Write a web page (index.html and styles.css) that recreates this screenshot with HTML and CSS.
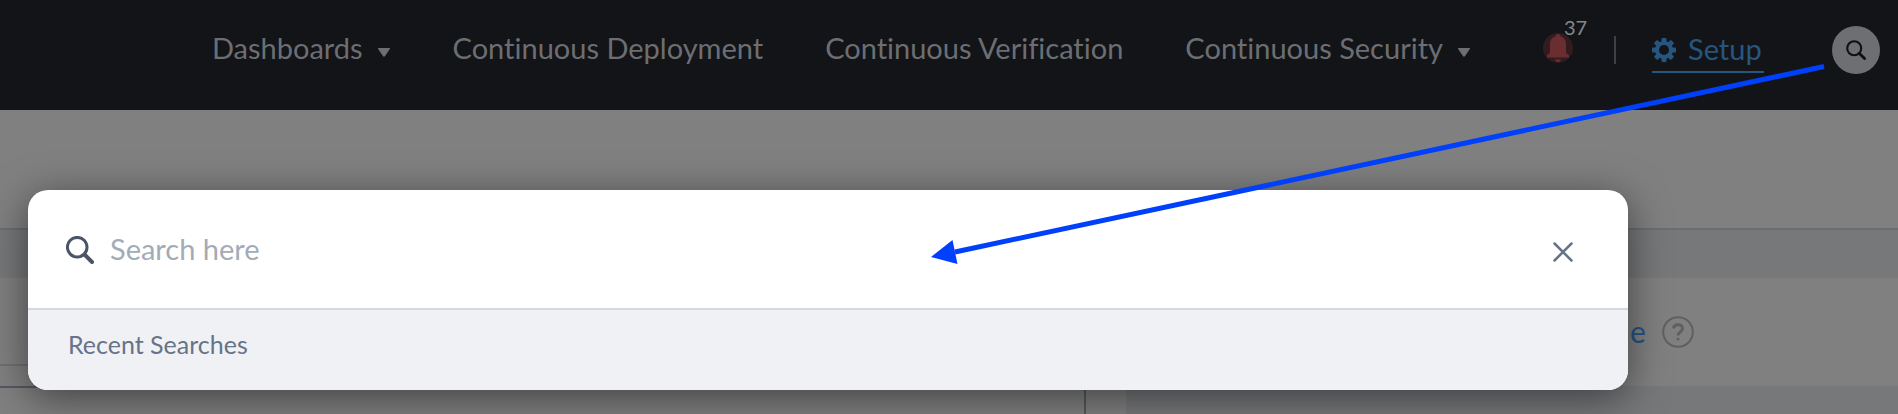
FILE: index.html
```html
<!DOCTYPE html>
<html lang="en">
<head>
<meta charset="utf-8">
<title>Setup</title>
<link rel="stylesheet" href="styles.css">
</head>
<body>
<header class="topbar">
  <nav class="nav">
    <button class="nav-item" type="button">Dashboards <svg class="caret" viewBox="0 0 14 10" aria-hidden="true"><path d="M1 0h12q1.400 0 .5 1.200L8 9.300q-1 1-2 0L.5 1.200Q-.4 0 1 0z"/></svg></button>
    <a class="nav-item" href="#">Continuous Deployment</a>
    <a class="nav-item" href="#">Continuous Verification</a>
    <button class="nav-item" type="button">Continuous Security <svg class="caret" viewBox="0 0 14 10" aria-hidden="true"><path d="M1 0h12q1.400 0 .5 1.200L8 9.300q-1 1-2 0L.5 1.200Q-.4 0 1 0z"/></svg></button>
  </nav>
  <button class="alerts" type="button" aria-label="37 alerts">
    <svg class="bell" viewBox="0 0 30 30" aria-hidden="true">
      <circle cx="15" cy="15" r="15" fill="#331c20"/>
      <path fill="#6a2d30" d="M15 1c1.500 0 2.500 1 2.700 2.600C21.500 4.800 23 8 23 11.500V18c0 2 .8 3.200 3 4.200V24.500H4V22.200C6.200 21.200 7 20 7 18v-6.500C7 8 8.500 4.800 12.300 3.600 12.500 2 13.500 1 15 1zM12 26.500h6q-.6 2.500-3 2.500t-3-2.500z"/>
    </svg>
    <span class="alert-count">37</span>
  </button>
  <span class="divider"></span>
  <a class="setup" href="#">
    <svg class="gear" viewBox="0 0 24 24" aria-hidden="true">
      <g fill="#265680">
        <rect x="9.500" y="0" width="5" height="24" rx="1"/>
        <rect x="9.500" y="0" width="5" height="24" rx="1" transform="rotate(45 12 12)"/>
        <rect x="9.500" y="0" width="5" height="24" rx="1" transform="rotate(90 12 12)"/>
        <rect x="9.500" y="0" width="5" height="24" rx="1" transform="rotate(135 12 12)"/>
        <circle cx="12" cy="12" r="9"/>
      </g>
      <circle cx="12" cy="12" r="5" fill="#121418"/>
    </svg>
    Setup
  </a>
  <button class="search-toggle" type="button" aria-label="Search">
    <svg viewBox="0 0 28 28" aria-hidden="true"><circle cx="11.500" cy="11.500" r="9.800"/><path d="M18.500 18.500L26 26" class="handle"/></svg>
  </button>
</header>

<main class="page">
  <div class="title-row"></div>
  <div class="band"></div>
  <div class="columns">
    <section class="list">
      <div class="list-head"></div>
      <div class="list-box"></div>
    </section>
    <section class="guide">
      <div class="guide-card">
        <a class="guide-link" href="#">e</a>
        <svg class="help" viewBox="0 0 32 32" aria-hidden="true"><circle cx="16" cy="16" r="14.800"/><path d="M11.500 12.500C11.800 10 13.600 8.800 16 8.800c2.600 0 4.500 1.400 4.500 3.700 0 3.500-4.500 3.500-4.500 7" class="mark"/><circle cx="16" cy="23" r="1.500" class="dot"/></svg>
      </div>
    </section>
  </div>
</main>

<div class="dialog" role="dialog" aria-label="Search">
  <div class="search-row">
    <label class="search-label" for="q" aria-label="Search">
      <svg viewBox="0 0 28 28" aria-hidden="true"><circle cx="11.200" cy="11.200" r="9.800"/><path d="M18.500 18.500L26 26" class="handle"/></svg>
    </label>
    <input class="search-input" id="q" type="text" placeholder="Search here">
    <button class="close" type="button" aria-label="Close"><svg viewBox="0 0 20 20" aria-hidden="true"><path d="M1.500 1.500l17 17M18.500 1.500l-17 17"/></svg></button>
  </div>
  <div class="recent">Recent Searches</div>
</div>

<svg class="arrow" viewBox="0 0 894 199" aria-hidden="true">
  <path d="M893 8.500L24 194" fill="none" stroke="#0040fb" stroke-width="5"/>
  <path d="M0 199L21.500 182L26.500 206z" fill="#0040fb"/>
</svg>
</body>
</html>
```
FILE: styles.css
```css
* { box-sizing: border-box; }
html { height: 100%; }
body {
  margin: 0;
  min-height: 100%;
  display: flex;
  flex-direction: column;
  position: relative;
  overflow: hidden;
  background: #808080;
  font-family: Lato, "Open Sans", sans-serif;
  font-size: 29px;
  font-variant-ligatures: none;
}
button { border: 0; padding: 0; background: none; font: inherit; color: inherit; cursor: pointer; }
a { color: inherit; text-decoration: none; }
svg { display: block; flex: none; fill: none; }

.topbar {
  display: flex;
  align-items: center;
  justify-content: flex-end;
  height: 110px;
  padding: 0 18px 10px 0;
  background: #121418;
  color: #6d6e72;
}
.nav { display: flex; gap: 62px; margin: 0 72px 4px 0; }
.nav-item { display: flex; align-items: center; gap: 14px; line-height: 36px; white-space: nowrap; }
.caret { width: 14px; height: 9px; margin-top: 8px; fill: #6d6e72; }
.alerts { position: relative; width: 30px; margin: 0 41px 4px 0; }
.bell { width: 30px; height: 30px; }
.alert-count { position: absolute; left: 21px; top: -18px; font-size: 20px; line-height: 24px; color: #85868a; }
.divider { width: 2px; height: 28px; margin-right: 36px; background: #3c4147; }
.setup {
  display: flex;
  align-items: center;
  gap: 12px;
  margin: 4px 68px 0 0;
  padding-bottom: 4px;
  min-width: 112px;
  line-height: 36px;
  color: #265680;
  border-bottom: 2px solid #265680;
}
.gear { width: 24px; height: 24px; margin-top: 2px; }
.search-toggle {
  display: grid;
  place-items: center;
  width: 48px;
  height: 48px;
  border-radius: 50%;
  background: #6e6f73;
}
.search-toggle svg { width: 20px; height: 20px; stroke: #0e1013; stroke-width: 3; }
.handle { stroke-width: 4; stroke-linecap: round; }

.page { flex: 1; display: flex; flex-direction: column; }
.title-row { height: 120px; border-bottom: 2px solid #6c6d70; }
.band { height: 48px; background: #77787a; }
.columns { flex: 1; display: grid; grid-template-columns: 1126fr 772fr; }
.list { display: flex; flex-direction: column; padding-right: 40px; }
.list-head { height: 88px; margin-right: -40px; border-bottom: 2px solid #707070; }
.list-box { flex: 1; margin-top: 20px; border: 2px solid #555a60; border-width: 2px 2px 0 0; }
.guide { background: #77787a; }
.guide-card {
  display: flex;
  align-items: center;
  gap: 16px;
  height: 108px;
  padding-left: 504px;
  background: #808080;
}
.guide-link { padding-bottom: 2px; font-size: 30px; line-height: 36px; color: #265282; }
.help { width: 32px; height: 32px; stroke: #606060; stroke-width: 2; }
.mark { stroke-width: 3; }
.dot { fill: #606060; stroke: none; }

.dialog {
  position: absolute;
  top: 190px;
  left: 28px;
  right: 270px;
  overflow: hidden;
  border-radius: 20px;
  background: #fff;
  box-shadow: 0 8px 40px rgba(0, 0, 0, .5);
}
.search-row {
  display: flex;
  align-items: center;
  gap: 16px;
  height: 120px;
  padding: 0 55px 0 38px;
  border-bottom: 2px solid #d5d8e0;
}
.search-label svg { width: 28px; height: 28px; margin-top: 2px; stroke: #4b5566; stroke-width: 3; }
.search-input {
  flex: 1;
  min-width: 0;
  padding: 0;
  border: 0;
  outline: 0;
  font: inherit;
  line-height: 36px;
  color: #4b5566;
}
.search-input::placeholder { color: #a2acb7; opacity: 1; }
.close svg { width: 20px; height: 20px; margin-top: 6px; stroke: #64748a; stroke-width: 2.500; stroke-linecap: round; }
.recent {
  height: 80px;
  padding: 18px 40px;
  background: #f0f1f4;
  font-size: 25px;
  line-height: 32px;
  color: #667389;
}

.arrow { position: absolute; top: 58px; left: 931px; width: 894px; height: 199px; overflow: visible; pointer-events: none; }
```
